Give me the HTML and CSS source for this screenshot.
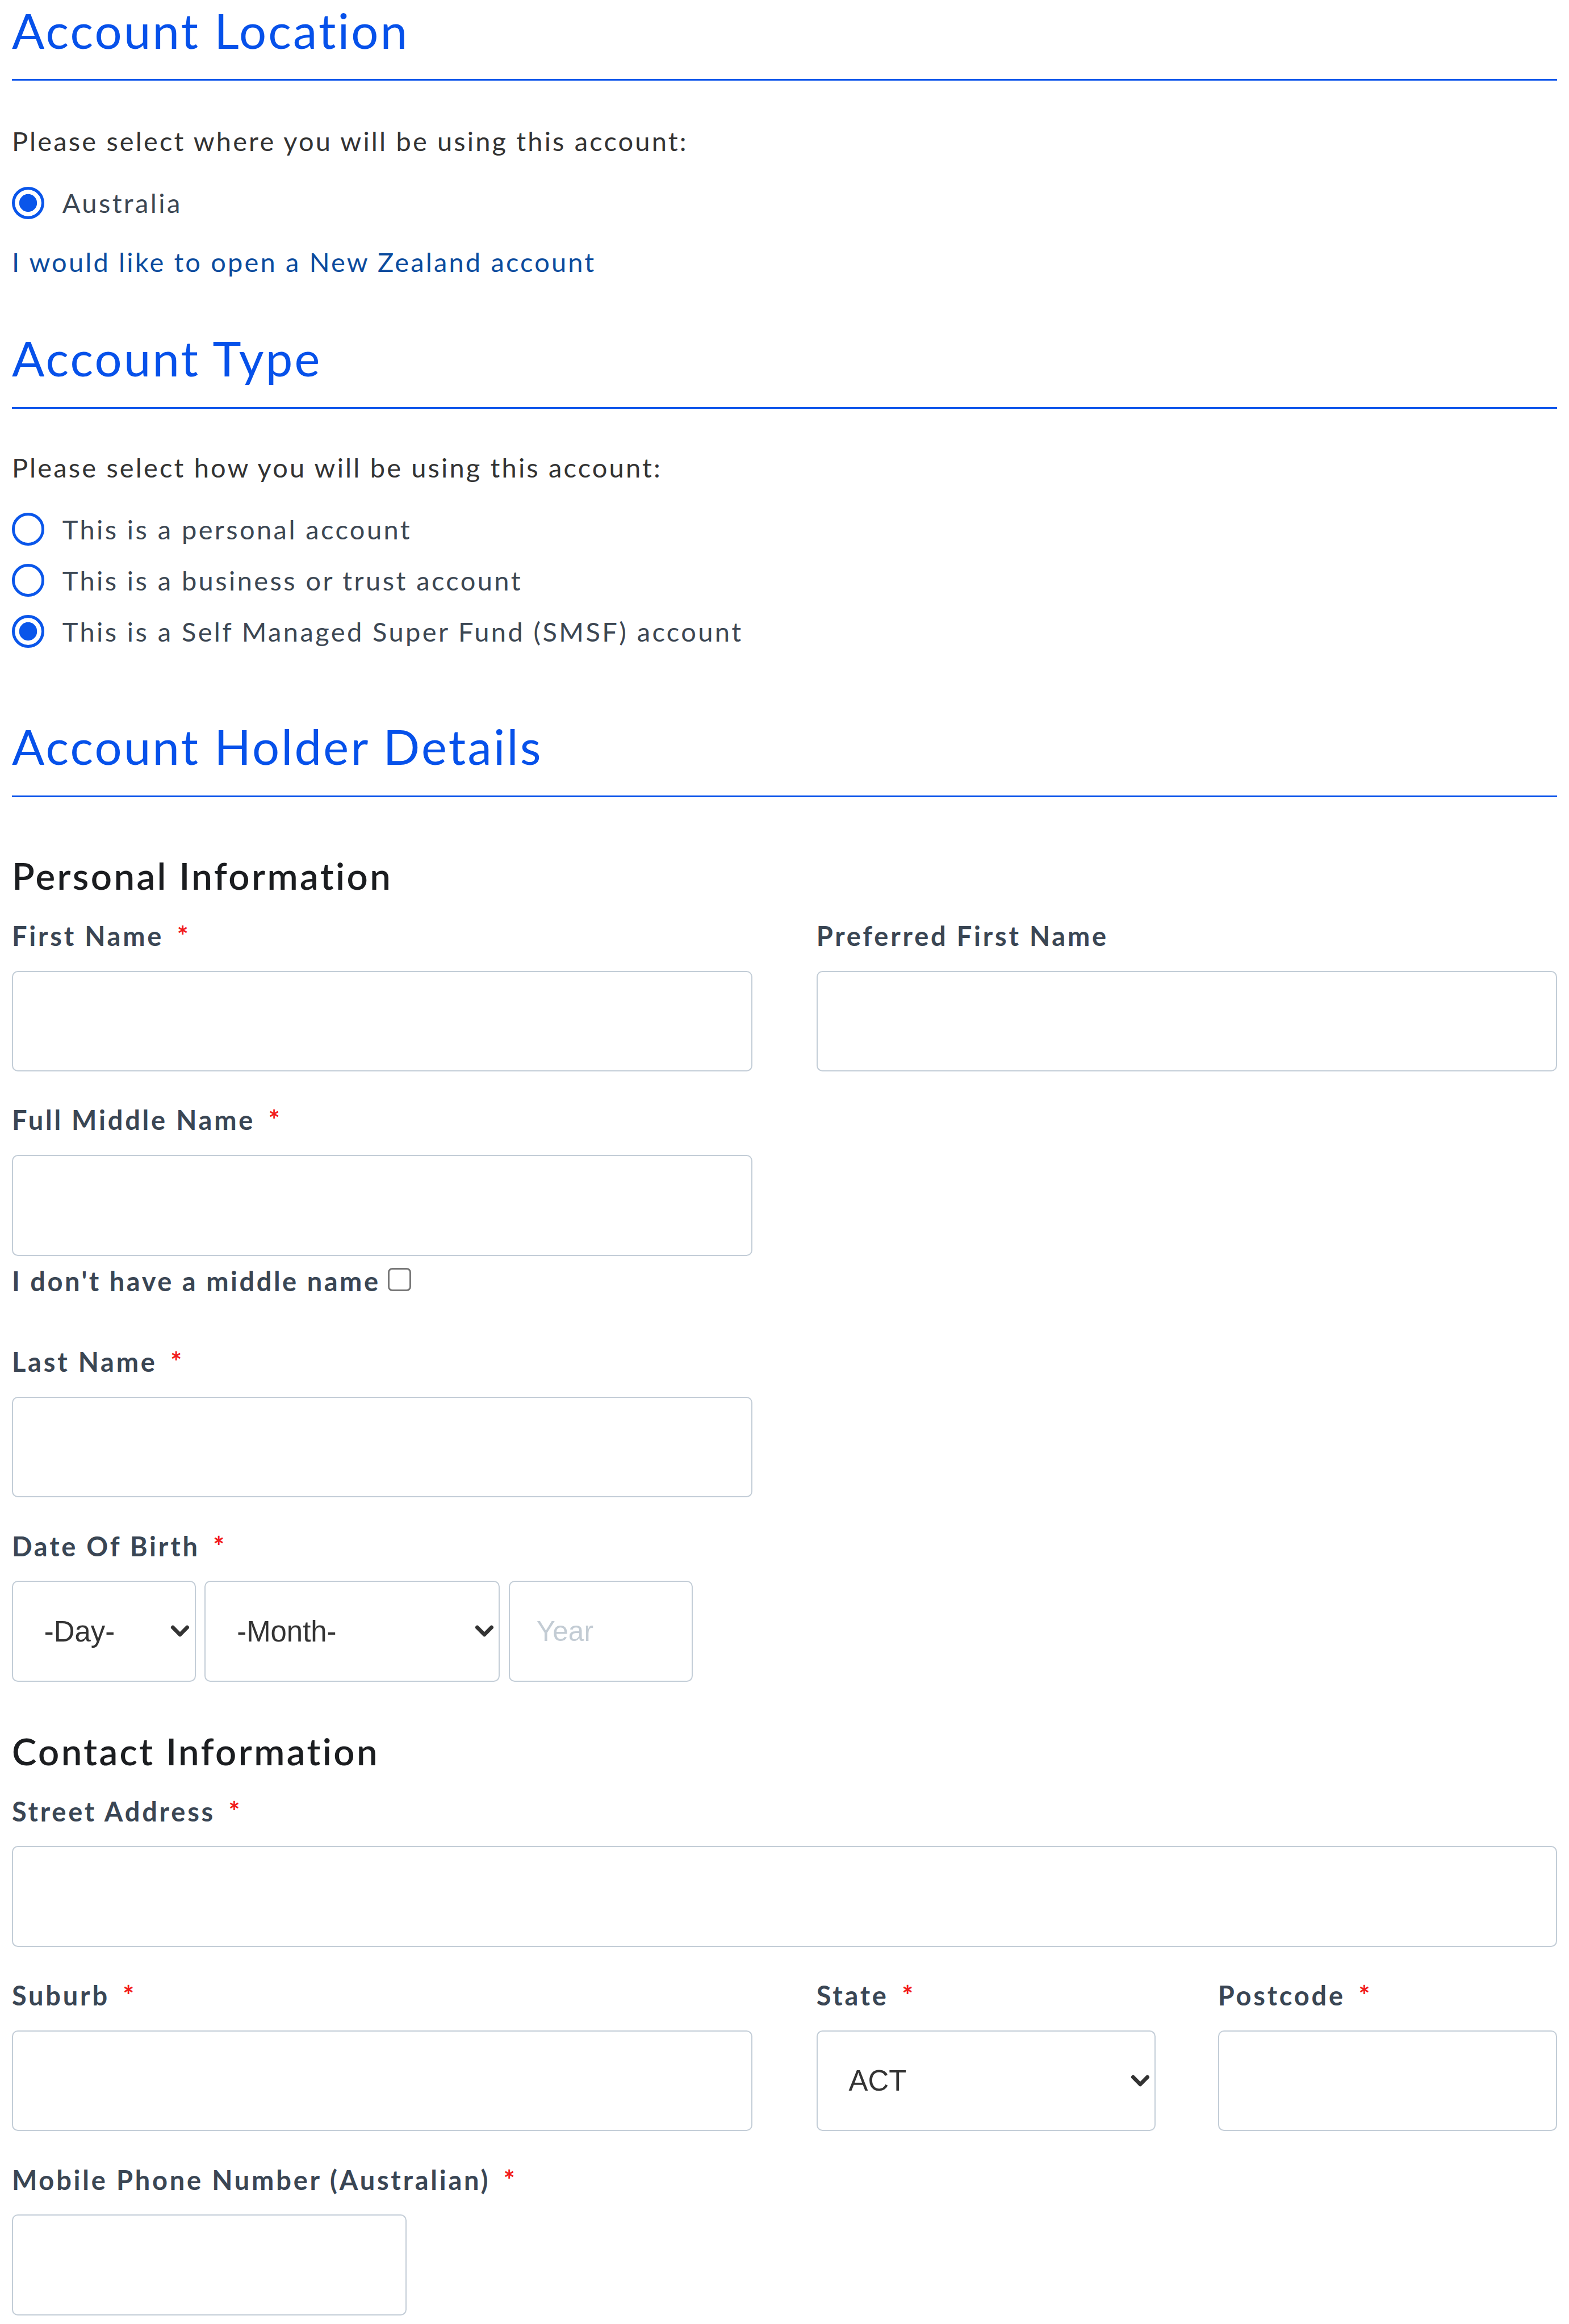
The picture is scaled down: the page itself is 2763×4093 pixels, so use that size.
FILE: index.html
```html
<!DOCTYPE html>
<html lang="en">
<head>
<meta charset="utf-8">
<title>Account Application</title>
<link rel="stylesheet" href="styles.css">
</head>
<body>
<main class="form">
  <section class="section">
    <h2 class="section-title">Account Location</h2>
    <p class="prompt">Please select where you will be using this account:</p>
    <div class="radio-group">
      <label class="radio"><input type="radio" name="location" checked><span>Australia</span></label>
    </div>
    <a class="link" href="#">I would like to open a New Zealand account</a>
  </section>

  <section class="section section-type">
    <h2 class="section-title">Account Type</h2>
    <p class="prompt prompt-type">Please select how you will be using this account:</p>
    <div class="radio-group">
      <label class="radio"><input type="radio" name="type"><span>This is a personal account</span></label>
      <label class="radio"><input type="radio" name="type"><span>This is a business or trust account</span></label>
      <label class="radio"><input type="radio" name="type" checked><span>This is a Self Managed Super Fund (SMSF) account</span></label>
    </div>
  </section>

  <section class="section section-holder">
    <h2 class="section-title">Account Holder Details</h2>

    <h3 class="subhead subhead-first">Personal Information</h3>

    <div class="row">
      <div class="field">
        <label class="label">First Name<span class="req">*</span></label>
        <input class="input" type="text">
      </div>
      <div class="field">
        <label class="label">Preferred First Name</label>
        <input class="input" type="text">
      </div>
    </div>

    <div class="row">
      <div class="field field-middle">
        <label class="label">Full Middle Name<span class="req">*</span></label>
        <input class="input" type="text">
        <label class="check">I don't have a middle name<input type="checkbox"></label>
      </div>
    </div>

    <div class="row">
      <div class="field">
        <label class="label">Last Name<span class="req">*</span></label>
        <input class="input" type="text">
      </div>
    </div>

    <div class="row">
      <div class="field">
        <label class="label">Date Of Birth<span class="req">*</span></label>
        <div class="dob">
          <div class="select-wrap select-day">
            <select class="select"><option>-Day-</option></select>
            <svg class="chev" viewBox="0 0 14 9" aria-hidden="true"><path d="M1.8 1.8 L7 7 L12.2 1.8" fill="none" stroke="#333" stroke-width="2.8" stroke-linecap="round" stroke-linejoin="round"/></svg>
          </div>
          <div class="select-wrap select-month">
            <select class="select"><option>-Month-</option></select>
            <svg class="chev" viewBox="0 0 14 9" aria-hidden="true"><path d="M1.8 1.8 L7 7 L12.2 1.8" fill="none" stroke="#333" stroke-width="2.8" stroke-linecap="round" stroke-linejoin="round"/></svg>
          </div>
          <input class="input input-year" type="text" placeholder="Year">
        </div>
      </div>
    </div>

    <h3 class="subhead">Contact Information</h3>

    <div class="field">
      <label class="label">Street Address<span class="req">*</span></label>
      <input class="input" type="text">
    </div>

    <div class="row">
      <div class="field">
        <label class="label">Suburb<span class="req">*</span></label>
        <input class="input" type="text">
      </div>
      <div class="row-inner">
        <div class="field">
          <label class="label">State<span class="req">*</span></label>
          <div class="select-wrap">
            <select class="select"><option>ACT</option></select>
            <svg class="chev" viewBox="0 0 14 9" aria-hidden="true"><path d="M1.8 1.8 L7 7 L12.2 1.8" fill="none" stroke="#333" stroke-width="2.8" stroke-linecap="round" stroke-linejoin="round"/></svg>
          </div>
        </div>
        <div class="field">
          <label class="label">Postcode<span class="req">*</span></label>
          <input class="input" type="text">
        </div>
      </div>
    </div>

    <div class="field">
      <label class="label">Mobile Phone Number (Australian)<span class="req">*</span></label>
      <input class="input input-phone" type="text">
    </div>
  </section>
</main>
</body>
</html>
```

FILE: styles.css
```css
html {
  zoom: 2.6115;
}

body {
  margin: 0;
  background: #ffffff;
  color: #333333;
  font-family: Lato, "Open Sans", sans-serif;
  font-size: 18px;
}

.form {
  padding: 1px 8px 0;
}

.section-title {
  margin: 0;
  padding-bottom: 14px;
  border-bottom: 1.15px solid #0d55ea;
  font-size: 32.5px;
  line-height: 38.4px;
  font-weight: 400;
  letter-spacing: 1.25px;
  color: #0651ea;
}

.section-type {
  margin-top: 32px;
}

.section-holder {
  margin-top: 41px;
}

.prompt {
  margin: 27px 0 0;
  line-height: 27px;
  letter-spacing: 1.2px;
  color: #333333;
}

.prompt-type {
  margin-top: 26px;
}

.radio-group {
  margin-top: 11px;
  display: flex;
  flex-direction: column;
}

.radio {
  display: flex;
  align-items: center;
  gap: 12px;
  height: 34.5px;
  color: #3c4753;
  line-height: 27px;
  letter-spacing: 1.3px;
}

.radio input {
  appearance: none;
  -webkit-appearance: none;
  margin: 0;
  width: 22px;
  height: 22px;
  flex: none;
  border: 2px solid #0a56ea;
  border-radius: 50%;
  background: #ffffff;
}

.radio input:checked {
  background: #0a56ea;
  box-shadow: inset 0 0 0 3px #ffffff;
}

.link {
  display: block;
  margin-top: 9px;
  line-height: 27px;
  letter-spacing: 1.2px;
  color: #0c4c9e;
  text-decoration: none;
}

.subhead {
  margin: 12.5px 0 12px;
  font-size: 25px;
  line-height: 30px;
  font-weight: 600;
  letter-spacing: 1.3px;
  color: #1b1d20;
}

.subhead-first {
  margin-top: 38px;
}

.row {
  display: grid;
  grid-template-columns: 1fr 1fr;
  column-gap: 43px;
}

.row-inner {
  display: grid;
  grid-template-columns: 1fr 1fr;
  column-gap: 42px;
}

.field {
  display: flex;
  flex-direction: column;
  align-items: stretch;
  margin-bottom: 19.3px;
}

.label {
  display: block;
  margin-bottom: 10px;
  line-height: 27px;
  font-weight: 700;
  letter-spacing: 1.45px;
  color: #3a4654;
}

.req {
  margin-left: 9px;
  color: #f21b1b;
  font-weight: 700;
}

.input {
  box-sizing: border-box;
  width: 100%;
  height: 68px;
  margin: 0;
  padding: 0 18px;
  border: 1px solid #c3cdd7;
  border-radius: 4px;
  background: #ffffff;
  font-family: "Liberation Sans", Arial, sans-serif;
  font-size: 19px;
  color: #333333;
  outline: none;
}

.input::placeholder {
  color: #c3ccd4;
}

.field-middle {
  margin-bottom: 27.5px;
}

.check {
  display: flex;
  align-items: flex-start;
  gap: 5px;
  margin-top: 3.5px;
  line-height: 27px;
  font-weight: 700;
  letter-spacing: 1.35px;
  color: #3a4654;
}

.check input {
  appearance: none;
  -webkit-appearance: none;
  box-sizing: border-box;
  margin: 4.5px 0 0;
  width: 16px;
  height: 16px;
  border: 1.2px solid #767676;
  border-radius: 3px;
  background: #ffffff;
}

.dob {
  display: flex;
  gap: 6px;
}

.select-wrap {
  position: relative;
}

.select-day {
  width: 124px;
}

.select-month {
  width: 199px;
}

.input-year {
  width: 124px;
}

.select {
  appearance: none;
  -webkit-appearance: none;
  box-sizing: border-box;
  width: 100%;
  height: 68px;
  margin: 0;
  padding: 0 30px 0 21px;
  border: 1px solid #c3cdd7;
  border-radius: 4px;
  background: #ffffff;
  font-family: "Liberation Sans", Arial, sans-serif;
  font-size: 19.5px;
  color: #333333;
  outline: none;
}

.chev {
  position: absolute;
  right: 4px;
  top: 29.5px;
  width: 13px;
  height: 9px;
  pointer-events: none;
}

.input-phone {
  width: 266px;
}
```
